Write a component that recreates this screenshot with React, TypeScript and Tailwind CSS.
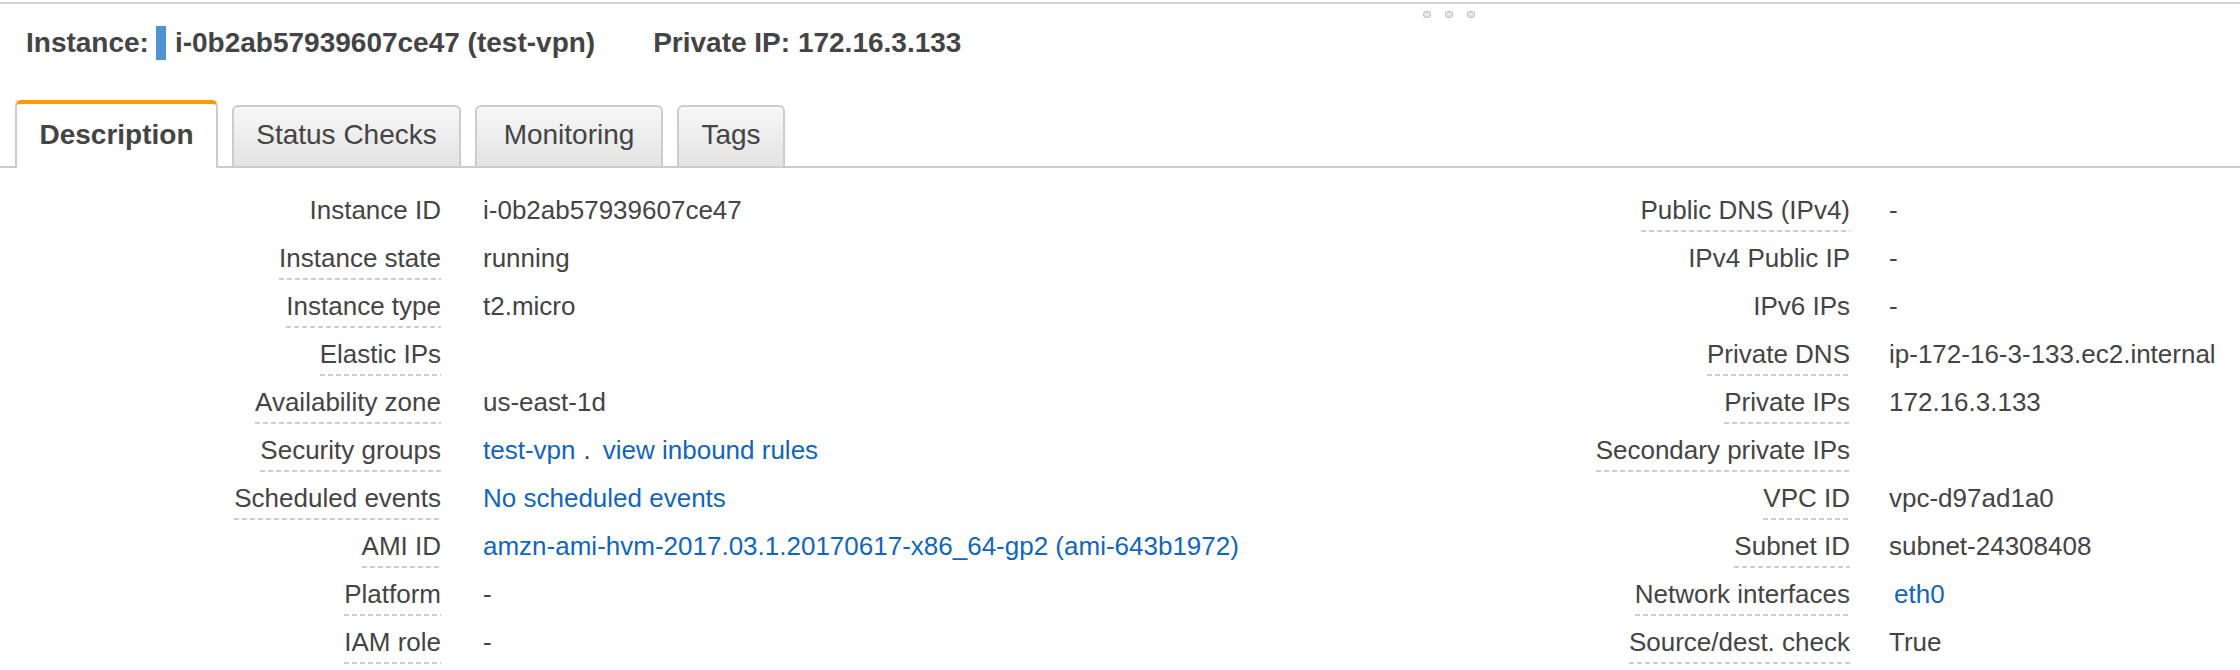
import React from 'react';

type Row = {
  label: string;
  value?: React.ReactNode;
  dashed?: boolean;
};

const Link: React.FC<{ children: React.ReactNode; className?: string }> = ({ children, className }) => (
  <a href="#" className={`text-[#1166bb] no-underline ${className ?? ''}`}>
    {children}
  </a>
);

const leftRows: Row[] = [
  { label: 'Instance ID', value: 'i-0b2ab57939607ce47' },
  { label: 'Instance state', value: 'running', dashed: true },
  { label: 'Instance type', value: 't2.micro', dashed: true },
  { label: 'Elastic IPs', value: '', dashed: true },
  { label: 'Availability zone', value: 'us-east-1d', dashed: true },
  {
    label: 'Security groups',
    dashed: true,
    value: (
      <>
        <Link>test-vpn</Link>
        <span className="ml-[8px] mr-[12px]">.</span>
        <Link>view inbound rules</Link>
      </>
    ),
  },
  { label: 'Scheduled events', dashed: true, value: <Link>No scheduled events</Link> },
  {
    label: 'AMI ID',
    dashed: true,
    value: <Link>amzn-ami-hvm-2017.03.1.20170617-x86_64-gp2 (ami-643b1972)</Link>,
  },
  { label: 'Platform', value: '-', dashed: true },
  { label: 'IAM role', value: '-', dashed: true },
];

const rightRows: Row[] = [
  { label: 'Public DNS (IPv4)', value: '-', dashed: true },
  { label: 'IPv4 Public IP', value: '-' },
  { label: 'IPv6 IPs', value: '-' },
  { label: 'Private DNS', value: 'ip-172-16-3-133.ec2.internal', dashed: true },
  { label: 'Private IPs', value: '172.16.3.133', dashed: true },
  { label: 'Secondary private IPs', value: '', dashed: true },
  { label: 'VPC ID', value: 'vpc-d97ad1a0', dashed: true },
  { label: 'Subnet ID', value: 'subnet-24308408', dashed: true },
  { label: 'Network interfaces', value: <Link className="ml-[5px]">eth0</Link>, dashed: true },
  { label: 'Source/dest. check', value: 'True', dashed: true },
];

const DetailColumn: React.FC<{ rows: Row[]; side: 'left' | 'right' }> = ({ rows, side }) => (
  <div
    className={`grid w-[1120px] ${side === 'left' ? 'grid-cols-[441px_1fr]' : 'grid-cols-[730px_1fr]'}`}
  >
    {rows.map((row) => (
      <React.Fragment key={row.label}>
        <div className="flex justify-end items-start h-[48px] pt-[10px] whitespace-nowrap">
          <div
            className={`leading-[28px] pb-[8px] ${
              row.dashed
                ? 'bg-[repeating-linear-gradient(to_right,#cdcdcd_0_5px,transparent_5px_8px)] bg-no-repeat bg-bottom bg-size-[100%_2px]'
                : ''
            }`}
          >
            {row.label}
          </div>
        </div>
        <div
          className={`h-[48px] pt-[10px] leading-[28px] whitespace-nowrap ${
            side === 'left' ? 'pl-[42px]' : 'pl-[39px]'
          }`}
        >
          {row.value}
        </div>
      </React.Fragment>
    ))}
  </div>
);

const tabs = [
  { name: 'Description', width: 'w-[203px]', active: true },
  { name: 'Status Checks', width: 'w-[229px]' },
  { name: 'Monitoring', width: 'w-[188px]' },
  { name: 'Tags', width: 'w-[108px]' },
];

const App: React.FC = () => {
  return (
    <div className="relative w-[2240px] h-[670px] overflow-hidden bg-white text-[#444] font-['Liberation_Sans',Arial,sans-serif]">
      {/* top splitter */}
      <div className="mt-[2px] h-[2px] bg-[#d0d0d0]" />
      <div className="absolute top-[11px] left-[1423px] flex gap-[14px]">
        {[0, 1, 2].map((i) => (
          <div key={i} className="w-[8px] h-[7px] rounded-[3px] border border-[#bdbdbd] bg-[#e6e6e6]" />
        ))}
      </div>

      {/* header */}
      <div className="flex items-center h-[34px] mt-[22px] pl-[26px] text-[28px] font-bold leading-[34px] whitespace-nowrap">
        <span>Instance:</span>
        <span className="ml-[7px] w-[10px] h-[34px] bg-[#4f93d2]" />
        <span className="ml-[9px]">i-0b2ab57939607ce47 (test-vpn)</span>
        <span className="ml-[58px]">Private IP: 172.16.3.133</span>
      </div>

      {/* tabs */}
      <div className="flex items-end gap-[14px] mt-[40px] pl-[15px] border-b-2 border-[#cccccc]">
        {tabs.map((tab) =>
          tab.active ? (
            <div
              key={tab.name}
              className={`${tab.width} h-[68px] -mb-[2px] bg-white border-t-4 border-x-2 border-t-[#ff9900] border-x-[#cccccc] rounded-t-[6px] pt-[16px] text-center text-[28px] font-bold leading-[30px]`}
            >
              {tab.name}
            </div>
          ) : (
            <div
              key={tab.name}
              className={`${tab.width} h-[61px] border-2 border-b-0 border-[#cccccc] rounded-t-[6px] bg-linear-to-b from-[#f7f7f7] to-[#e3e3e3] pt-[13px] text-center text-[28px] leading-[30px]`}
            >
              {tab.name}
            </div>
          ),
        )}
      </div>

      {/* description */}
      <div className="flex pt-[18px] text-[26px]">
        <DetailColumn rows={leftRows} side="left" />
        <DetailColumn rows={rightRows} side="right" />
      </div>
    </div>
  );
};

export default App;
